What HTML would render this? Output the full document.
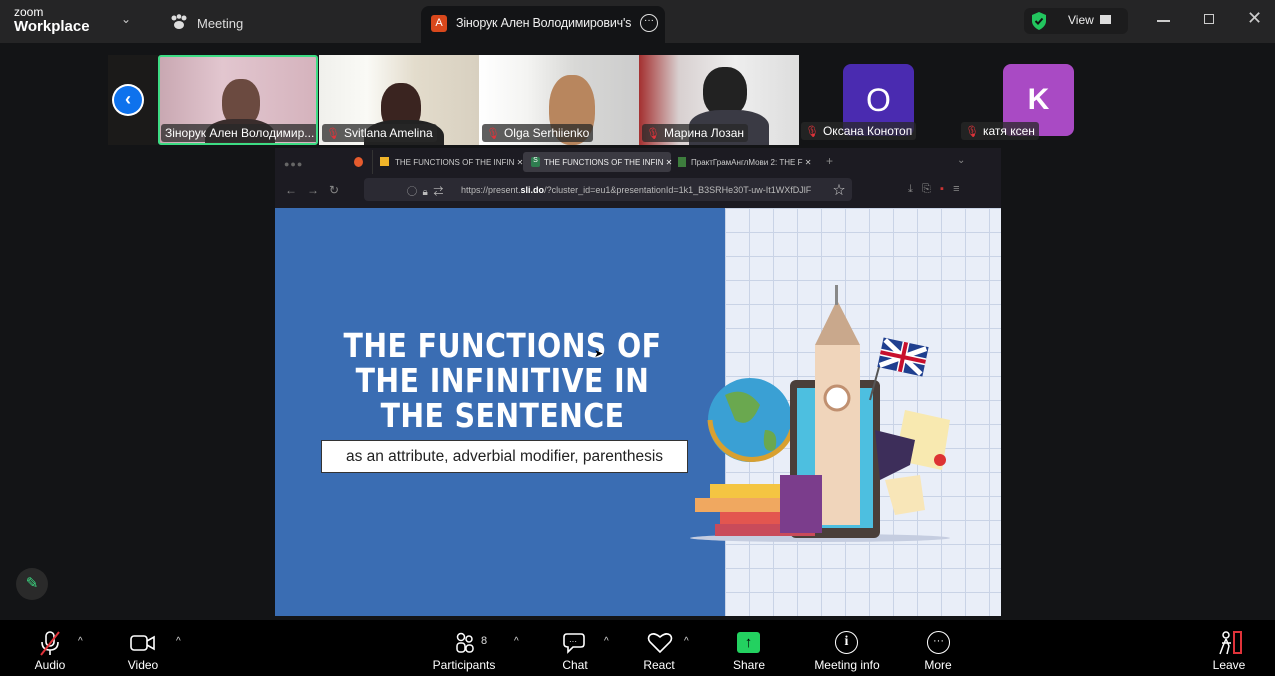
<!DOCTYPE html>
<html><head><meta charset="utf-8"><style>
*{margin:0;padding:0;box-sizing:border-box}
body{width:1275px;height:676px;background:#131416;font-family:"Liberation Sans","Noto Sans CJK SC",sans-serif;position:relative;overflow:hidden;color:#fff}
.top{position:absolute;left:0;top:0;width:1275px;height:43px;background:#252526}
.abs{position:absolute}
.thumb{position:absolute;top:55px;width:160px;height:90px;overflow:hidden}
.lbl{position:absolute;bottom:3px;left:3px;background:rgba(40,40,40,.75);font-size:12px;padding:2px 4px;border-radius:3px;white-space:nowrap;color:#fff}
.mic{color:#e0333a;font-size:11px;margin-right:4px}
.bot{position:absolute;left:0;top:620px;width:1275px;height:56px;background:#000}
.bi{position:absolute;top:658px;font-size:12px;color:#fff;transform:translateX(-50%);white-space:nowrap}
.car{position:absolute;top:636px;font-size:10px;color:#ddd}
</style></head><body>
<div class="top">
 <div class="abs" style="left:14px;top:7px;font-size:12px;line-height:11px">zoom</div>
 <div class="abs" style="left:14px;top:18px;font-size:15px;font-weight:bold">Workplace</div>
 <div class="abs" style="left:121px;top:12px;font-size:12px;color:#ccc">⌄</div>
 <svg class="abs" style="left:170px;top:14px" width="18" height="16" viewBox="0 0 18 16"><circle cx="4" cy="4" r="2.5" fill="#ddd"/><circle cx="9" cy="2.5" r="2.3" fill="#ddd"/><circle cx="14" cy="4" r="2.5" fill="#ddd"/><ellipse cx="9" cy="11" rx="5" ry="4" fill="#ddd"/></svg>
 <div class="abs" style="left:197px;top:16px;font-size:13px;color:#ddd">Meeting</div>
 <div class="abs" style="left:421px;top:6px;width:244px;height:38px;background:#131416;border-radius:8px 8px 0 0"></div>
 <div class="abs" style="left:431px;top:15px;width:16px;height:17px;background:#d9481c;border-radius:3px;font-size:11px;text-align:center;line-height:17px">A</div>
 <div class="abs" style="left:456px;top:16px;font-size:12.5px;color:#eee;letter-spacing:-0.2px">Зінорук Ален Володимирович's</div>
 <div class="abs" style="left:640px;top:14px;width:18px;height:18px;border:1.5px solid #ddd;border-radius:50%;font-size:10px;text-align:center;line-height:12px">···</div>
 <div class="abs" style="left:1024px;top:8px;width:104px;height:26px;background:#1c1c1d;border-radius:6px"></div>
 <svg class="abs" style="left:1030px;top:11px" width="18" height="20" viewBox="0 0 18 20"><path d="M9 1L16 4V10C16 14 13 17 9 19C5 17 2 14 2 10V4Z" fill="#22c55e"/><path d="M5.5 10L8 12.5L12.5 7.5" stroke="#111" stroke-width="2" fill="none"/></svg>
 <div class="abs" style="left:1068px;top:13px;font-size:12px;color:#eee">View</div>
 <div class="abs" style="left:1100px;top:15px;width:11px;height:9px;background:#ddd"></div>
 <div class="abs" style="left:1157px;top:20px;width:13px;height:1.5px;background:#ccc"></div>
 <div class="abs" style="left:1204px;top:14px;width:10px;height:10px;border:1.5px solid #ccc"></div>
 <div class="abs" style="left:1247px;top:8px;font-size:18px;color:#ccc">✕</div>
</div>
<div class="abs" style="left:108px;top:55px;width:50px;height:90px;background:#1b1a19"></div>
<div class="abs" style="left:112px;top:84px;width:32px;height:32px;border-radius:50%;background:#fff"></div>
<div class="abs" style="left:114px;top:86px;width:28px;height:28px;border-radius:50%;background:#0e72ed;text-align:center;font-size:18px;line-height:26px;font-weight:bold">‹</div>
<div class="thumb" style="left:158px;background:linear-gradient(90deg,#c9a8b2,#e2c6cf 40%,#d5b3bd);border:2px solid #3ddc84;border-radius:3px">
 <div class="abs" style="left:62px;top:22px;width:38px;height:48px;border-radius:45%;background:#6b4a40"></div>
 <div class="abs" style="left:45px;top:62px;width:70px;height:40px;border-radius:40% 40% 0 0;background:#3a2d2c"></div>
 <div class="lbl" style="left:1px;bottom:1px">Зінорук Ален Володимир...</div></div>
<div class="thumb" style="left:319px;background:linear-gradient(90deg,#f0f0ec,#fafaf6 30%,#e3dccc 60%,#d8d0c0)">
 <div class="abs" style="left:62px;top:28px;width:40px;height:50px;border-radius:45%;background:#3a2420"></div>
 <div class="abs" style="left:45px;top:65px;width:80px;height:40px;border-radius:40% 40% 0 0;background:#222"></div>
 <div class="lbl"><span class="mic">🎙</span>Svitlana Amelina</div></div>
<div class="thumb" style="left:479px;background:linear-gradient(90deg,#fff,#f4f4f2 30%,#d8d8d6 60%,#ccc)">
 <div class="abs" style="left:70px;top:20px;width:46px;height:70px;border-radius:45%;background:#b8865e"></div>
 <div class="lbl"><span class="mic">🎙</span>Olga Serhiienko</div></div>
<div class="thumb" style="left:639px;background:linear-gradient(90deg,#a43030,#d8d0d0 25%,#eee 60%,#ddd)">
 <div class="abs" style="left:64px;top:12px;width:44px;height:50px;border-radius:45%;background:#222"></div>
 <div class="abs" style="left:50px;top:55px;width:80px;height:40px;border-radius:40% 40% 0 0;background:#3a3a44"></div>
 <div class="lbl"><span class="mic">🎙</span>Марина Лозан</div></div>
<div class="abs" style="left:843px;top:64px;width:71px;height:72px;border-radius:8px;background:#4a2bb0;font-size:32px;text-align:center;line-height:72px">O</div>
<div class="abs" style="left:1003px;top:64px;width:71px;height:72px;border-radius:8px;background:#a94ac4;font-size:30px;text-align:center;line-height:72px;font-weight:bold">K</div>
<div class="lbl" style="left:801px;top:122px;bottom:auto"><span class="mic">🎙</span>Оксана Конотоп</div>
<div class="lbl" style="left:961px;top:122px;bottom:auto"><span class="mic">🎙</span>катя ксен</div>

<!-- browser -->
<div class="abs" style="left:275px;top:148px;width:726px;height:60px;background:#1c1b22"></div>
<div class="abs" style="left:284px;top:159px;font-size:9px;color:#666;letter-spacing:1px">●●●</div>
<div class="abs" style="left:354px;top:157px;width:9px;height:10px;border-radius:50%;background:#e55b2d"></div>
<div class="abs" style="left:372px;top:150px;width:1px;height:24px;background:#333"></div>
<div class="abs" style="left:380px;top:157px;width:9px;height:9px;background:#f0b429"></div>
<div class="abs" style="left:395px;top:158px;font-size:8px;color:#ccc">THE FUNCTIONS OF THE INFIN ✕</div>
<div class="abs" style="left:523px;top:152px;width:148px;height:20px;background:#3b3a42;border-radius:3px"></div>
<div class="abs" style="left:531px;top:157px;width:9px;height:10px;background:#2e7d4f;border-radius:2px;font-size:7px;text-align:center">S</div>
<div class="abs" style="left:544px;top:158px;font-size:8px;color:#eee">THE FUNCTIONS OF THE INFIN ✕</div>
<div class="abs" style="left:678px;top:157px;width:8px;height:10px;background:#3d7d3d"></div>
<div class="abs" style="left:691px;top:158px;font-size:8px;color:#ccc">ПрактГрамАнглМови 2: THE F ✕</div>
<div class="abs" style="left:826px;top:154px;font-size:12px;color:#888">+</div>
<div class="abs" style="left:957px;top:155px;font-size:10px;color:#888">⌄</div>
<div class="abs" style="left:285px;top:183px;font-size:12px;color:#888">←&nbsp;&nbsp;&nbsp;→&nbsp;&nbsp;&nbsp;↻</div>
<div class="abs" style="left:364px;top:178px;width:488px;height:23px;background:#2b2a33;border-radius:4px"></div>
<div class="abs" style="left:407px;top:183px;font-size:10px;color:#bbb">◯&nbsp;&nbsp;🔒︎&nbsp;&nbsp;⇄</div>
<div class="abs" style="left:461px;top:185px;font-size:9px;color:#bbb;white-space:nowrap">https://present.<b style="color:#fff">sli.do</b>/?cluster_id=eu1&amp;presentationId=1k1_B3SRHe30T-uw-It1WXfDJlF</div>
<div class="abs" style="left:833px;top:181px;font-size:12px;color:#ccc">☆</div>
<div class="abs" style="left:908px;top:183px;font-size:11px;color:#888">⤓&nbsp;&nbsp;&nbsp;⎘&nbsp;&nbsp;&nbsp;<span style="color:#c33">▪</span>&nbsp;&nbsp;&nbsp;≡</div>

<!-- slide -->
<div class="abs" style="left:275px;top:208px;width:450px;height:408px;background:#3a6db3"></div>
<div class="abs" style="left:725px;top:208px;width:276px;height:408px;background-color:#e9eef8;background-image:linear-gradient(#c9d3e6 1px,transparent 1px),linear-gradient(90deg,#c9d3e6 1px,transparent 1px);background-size:24px 24px"></div>
<div class="abs" style="left:280px;top:328px;width:445px;text-align:center;font-size:33px;font-weight:bold;line-height:35px;letter-spacing:0.5px;font-family:'DejaVu Sans',sans-serif;transform:scaleX(.86);white-space:nowrap">THE FUNCTIONS OF<br>THE INFINITIVE IN<br>THE SENTENCE</div>
<div class="abs" style="left:321px;top:440px;width:367px;height:33px;background:#fff;border:1px solid #333;color:#222;font-size:15.5px;text-align:center;line-height:31px;font-family:'Liberation Sans',sans-serif;white-space:nowrap">as an attribute, adverbial modifier, parenthesis</div>
<svg class="abs" style="left:680px;top:280px" width="290" height="270" viewBox="0 0 290 270">
 <ellipse cx="140" cy="258" rx="130" ry="4" fill="#c5cde0"/>
 <circle cx="70" cy="140" r="42" fill="#3aa0d4"/><path d="M45 115Q65 105 80 125Q70 150 55 140Z M85 150Q100 150 95 170Q80 175 85 150Z" fill="#6aa84f"/>
 <path d="M30 140A42 42 0 0 0 112 150" stroke="#d8a030" stroke-width="5" fill="none"/>
 <rect x="110" y="100" width="90" height="158" rx="6" fill="#4a3f3a"/><rect x="117" y="108" width="76" height="140" fill="#4dbfe0"/>
 <rect x="135" y="65" width="45" height="180" fill="#f0d5bb"/><path d="M135 65L157 20L180 65Z" fill="#c9a88c"/><rect x="155" y="5" width="3" height="20" fill="#888"/>
 <circle cx="157" cy="118" r="12" fill="#fff" stroke="#c09070" stroke-width="3"/>
 <rect x="40" y="232" width="95" height="14" fill="#e3564f"/><rect x="15" y="218" width="110" height="14" fill="#f0a860"/><rect x="30" y="204" width="95" height="14" fill="#f4c542"/><rect x="35" y="244" width="100" height="12" fill="#c94b5a"/>
 <rect x="100" y="195" width="42" height="58" fill="#7b3d8c"/>
 <line x1="190" y1="120" x2="205" y2="65" stroke="#555" stroke-width="2"/>
 <rect x="200" y="62" width="46" height="30" fill="#1f3f8f" transform="rotate(12 223 77)"/>
 <path d="M202 64L244 90M244 64L202 90" stroke="#fff" stroke-width="5" transform="rotate(12 223 77)"/>
 <path d="M223 62V92M200 77H246" stroke="#fff" stroke-width="7" transform="rotate(12 223 77)"/>
 <path d="M223 62V92M200 77H246" stroke="#c8102e" stroke-width="4" transform="rotate(12 223 77)"/>
 <path d="M225 130L270 140L262 190L215 180Z" fill="#f8e9b0"/><path d="M205 200L240 195L245 230L215 235Z" fill="#f8e6b8"/><circle cx="260" cy="180" r="6" fill="#d33"/>
 <path d="M195 150L235 160L230 185L200 200Z" fill="#3d2e5a"/>
</svg>
<div class="abs" style="left:594px;top:347px;font-size:11px;color:#000">➤</div>

<div class="abs" style="left:16px;top:568px;width:32px;height:32px;border-radius:50%;background:#2a2a2a;color:#3ddc84;text-align:center;line-height:32px;font-size:15px">✎</div>

<div class="bot"></div>
<svg class="abs" style="left:38px;top:630px" width="24" height="26" viewBox="0 0 24 26"><rect x="8" y="2" width="8" height="14" rx="4" fill="none" stroke="#fff" stroke-width="1.6"/><path d="M4 12Q4 20 12 20Q20 20 20 12M12 20V25" stroke="#fff" stroke-width="1.6" fill="none"/><line x1="3" y1="25" x2="21" y2="2" stroke="#e0333a" stroke-width="2"/></svg>
<div class="car" style="left:78px">^</div>
<svg class="abs" style="left:130px;top:634px" width="26" height="18" viewBox="0 0 26 18"><rect x="1" y="2" width="16" height="14" rx="3" fill="none" stroke="#fff" stroke-width="1.6"/><path d="M17 7L24 3V15L17 11" fill="none" stroke="#fff" stroke-width="1.6"/></svg>
<div class="car" style="left:176px">^</div>
<div class="bi" style="left:50px">Audio</div><div class="bi" style="left:143px">Video</div>
<svg class="abs" style="left:455px;top:632px" width="20" height="22" viewBox="0 0 20 22"><circle cx="6" cy="5" r="3.5" fill="none" stroke="#fff" stroke-width="1.5"/><circle cx="14" cy="7" r="3" fill="none" stroke="#fff" stroke-width="1.5"/><rect x="2" y="11" width="8" height="9" rx="3" fill="none" stroke="#fff" stroke-width="1.5"/><rect x="11" y="13" width="7" height="7" rx="3" fill="none" stroke="#fff" stroke-width="1.5"/></svg>
<div class="abs" style="left:481px;top:635px;font-size:11px;color:#ddd">8</div>
<div class="car" style="left:514px">^</div>
<div class="bi" style="left:464px">Participants</div>
<svg class="abs" style="left:563px;top:631px" width="22" height="24" viewBox="0 0 22 24"><path d="M4 3H18Q21 3 21 6V13Q21 16 18 16H10L5 21V16Q1 16 1 13V6Q1 3 4 3Z" fill="none" stroke="#fff" stroke-width="1.6"/><text x="6" y="13" font-size="8" fill="#fff">···</text></svg>
<div class="car" style="left:604px">^</div><div class="bi" style="left:575px">Chat</div>
<svg class="abs" style="left:647px;top:632px" width="26" height="22" viewBox="0 0 26 22"><path d="M13 20L3 10Q0 6 3 3Q7 0 13 5Q19 0 23 3Q26 6 23 10Z" fill="none" stroke="#fff" stroke-width="1.6"/></svg>
<div class="car" style="left:684px">^</div><div class="bi" style="left:659px">React</div>
<div class="abs" style="left:737px;top:632px;width:23px;height:21px;background:#23d160;border-radius:3px;color:#000;text-align:center;font-size:15px;line-height:21px;font-weight:bold">↑</div>
<div class="bi" style="left:749px">Share</div>
<div class="abs" style="left:835px;top:631px;width:23px;height:23px;border:1.6px solid #fff;border-radius:50%;text-align:center;font-size:14px;line-height:20px;font-family:'Liberation Serif',serif;font-weight:bold">i</div>
<div class="bi" style="left:847px">Meeting info</div>
<div class="abs" style="left:927px;top:631px;width:23px;height:23px;border:1.6px solid #fff;border-radius:50%;text-align:center;font-size:11px;line-height:18px">···</div>
<div class="bi" style="left:938px">More</div>
<svg class="abs" style="left:1217px;top:630px" width="26" height="26" viewBox="0 0 26 26"><circle cx="9" cy="5" r="3" fill="none" stroke="#fff" stroke-width="1.5"/><path d="M9 9L6 16L3 24M9 9L12 16L10 24M5 13L14 13" stroke="#fff" stroke-width="1.5" fill="none"/><rect x="17" y="2" width="7" height="21" fill="none" stroke="#e0333a" stroke-width="2"/></svg>
<div class="bi" style="left:1229px">Leave</div>
</body></html>
